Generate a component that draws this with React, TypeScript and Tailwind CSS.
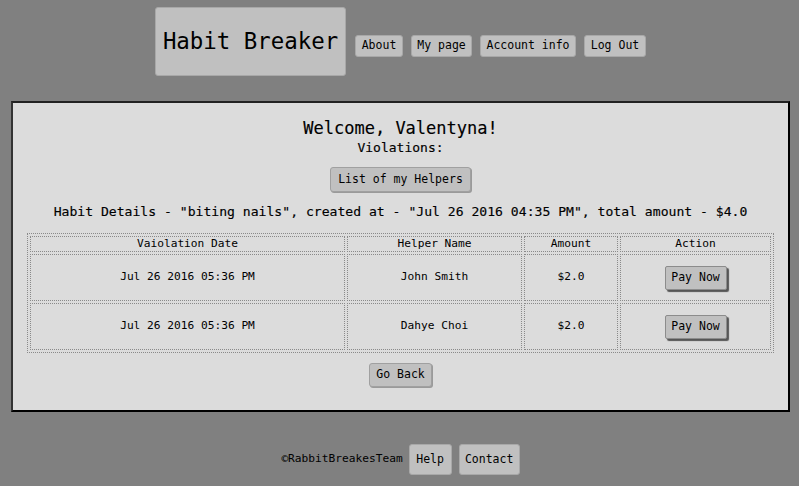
import React from "react"

const mono = "font-['DejaVu_Sans_Mono',monospace]"

function NavButton({ label, w }: { label: string; w: string }) {
  return (
    <button className={`${w} h-[22px] bg-[#c0c0c0] border border-[#a8a8a8] rounded-[3px] text-[11.5px] text-black leading-none`}>
      {label}
    </button>
  )
}

export default function App() {
  const rows = [
    { date: "Jul 26 2016 05:36 PM", helper: "John Smith", amount: "$2.0" },
    { date: "Jul 26 2016 05:36 PM", helper: "Dahye Choi", amount: "$2.0" },
  ]

  return (
    <div className={`${mono} w-[799px] h-[486px] bg-[#808080] text-black overflow-hidden`}>
      {/* header */}
      <header className="flex justify-center items-baseline gap-[8px] pt-[7px] pl-[2px]">
        <div className="w-[191px] h-[69px] bg-[#c0c0c0] border border-[#a8a8a8] rounded-[3px] flex items-center justify-center mr-[1px]">
          <span className="text-[22.4px] leading-none">Habit Breaker</span>
        </div>
        <NavButton label="About" w="w-[48px]" />
        <NavButton label="My page" w="w-[61px]" />
        <NavButton label="Account info" w="w-[96px]" />
        <NavButton label="Log Out" w="w-[62px]" />
      </header>

      {/* main panel */}
      <main className="ml-[11px] mr-[9px] mt-[25px] h-[311px] bg-[#dcdcdc] border-2 border-black border-l-[#333] border-t-[#222] flex flex-col items-center">
        <h1 className="mt-[15px] text-[17px] leading-[20px] [-webkit-text-stroke:0.15px_black]">Welcome, Valentyna!</h1>
        <h2 className="mt-[1px] text-[13px] leading-[18px] [-webkit-text-stroke:0.15px_black]">Violations:</h2>
        <button className="mt-[10px] h-[25px] px-[7px] bg-[#c0c0c0] border border-[#a0a0a0] rounded-[3px] text-[11.5px] shadow-[1px_1px_0_#9a9a9a]">
          List of my Helpers
        </button>
        <p className="mt-[11px] text-[13.1px] leading-[18px] [-webkit-text-stroke:0.15px_black]">
          Habit Details - "biting nails", created at - "Jul 26 2016 04:35 PM", total amount - $4.0
        </p>

        <table className="mt-[12px] w-[747px] border border-dotted border-[#8a8a8a] border-separate border-spacing-[2px] text-[11.2px]">
          <thead>
            <tr className="h-[16px]">
              <th className="w-[315px] font-normal border border-dotted border-[#8a8a8a] leading-none">Vaiolation Date</th>
              <th className="w-[175px] font-normal border border-dotted border-[#8a8a8a] leading-none">Helper Name</th>
              <th className="w-[94px] font-normal border border-dotted border-[#8a8a8a] leading-none">Amount</th>
              <th className="font-normal border border-dotted border-[#8a8a8a] leading-none">Action</th>
            </tr>
          </thead>
          <tbody>
            {rows.map((r, i) => (
              <tr key={i} className="h-[47px]">
                <td className="text-center border border-dotted border-[#8a8a8a]">{r.date}</td>
                <td className="text-center border border-dotted border-[#8a8a8a]">{r.helper}</td>
                <td className="text-center border border-dotted border-[#8a8a8a]">{r.amount}</td>
                <td className="text-center border border-dotted border-[#8a8a8a]">
                  <button className="h-[24px] w-[62px] bg-[#c0c0c0] border border-[#8c8c8c] rounded-[2px] shadow-[2px_2px_1px_#555] text-[11.5px]">
                    Pay Now
                  </button>
                </td>
              </tr>
            ))}
          </tbody>
        </table>

        <button className="mt-[10px] h-[24px] w-[63px] bg-[#c0c0c0] border border-[#a0a0a0] rounded-[3px] text-[11.5px] shadow-[1px_1px_0_#9a9a9a]">
          Go Back
        </button>
      </main>

      {/* footer */}
      <footer className="flex justify-center items-center mt-[32px] pl-[2px]">
        <span className="text-[11.2px] mr-[6px]">©RabbitBreakesTeam</span>
        <button className="w-[43px] h-[31px] mr-[7px] bg-[#c0c0c0] border border-[#a8a8a8] rounded-[3px] text-[11.5px]">Help</button>
        <button className="w-[61px] h-[31px] bg-[#c0c0c0] border border-[#a8a8a8] rounded-[3px] text-[11.5px]">Contact</button>
      </footer>
    </div>
  )
}
